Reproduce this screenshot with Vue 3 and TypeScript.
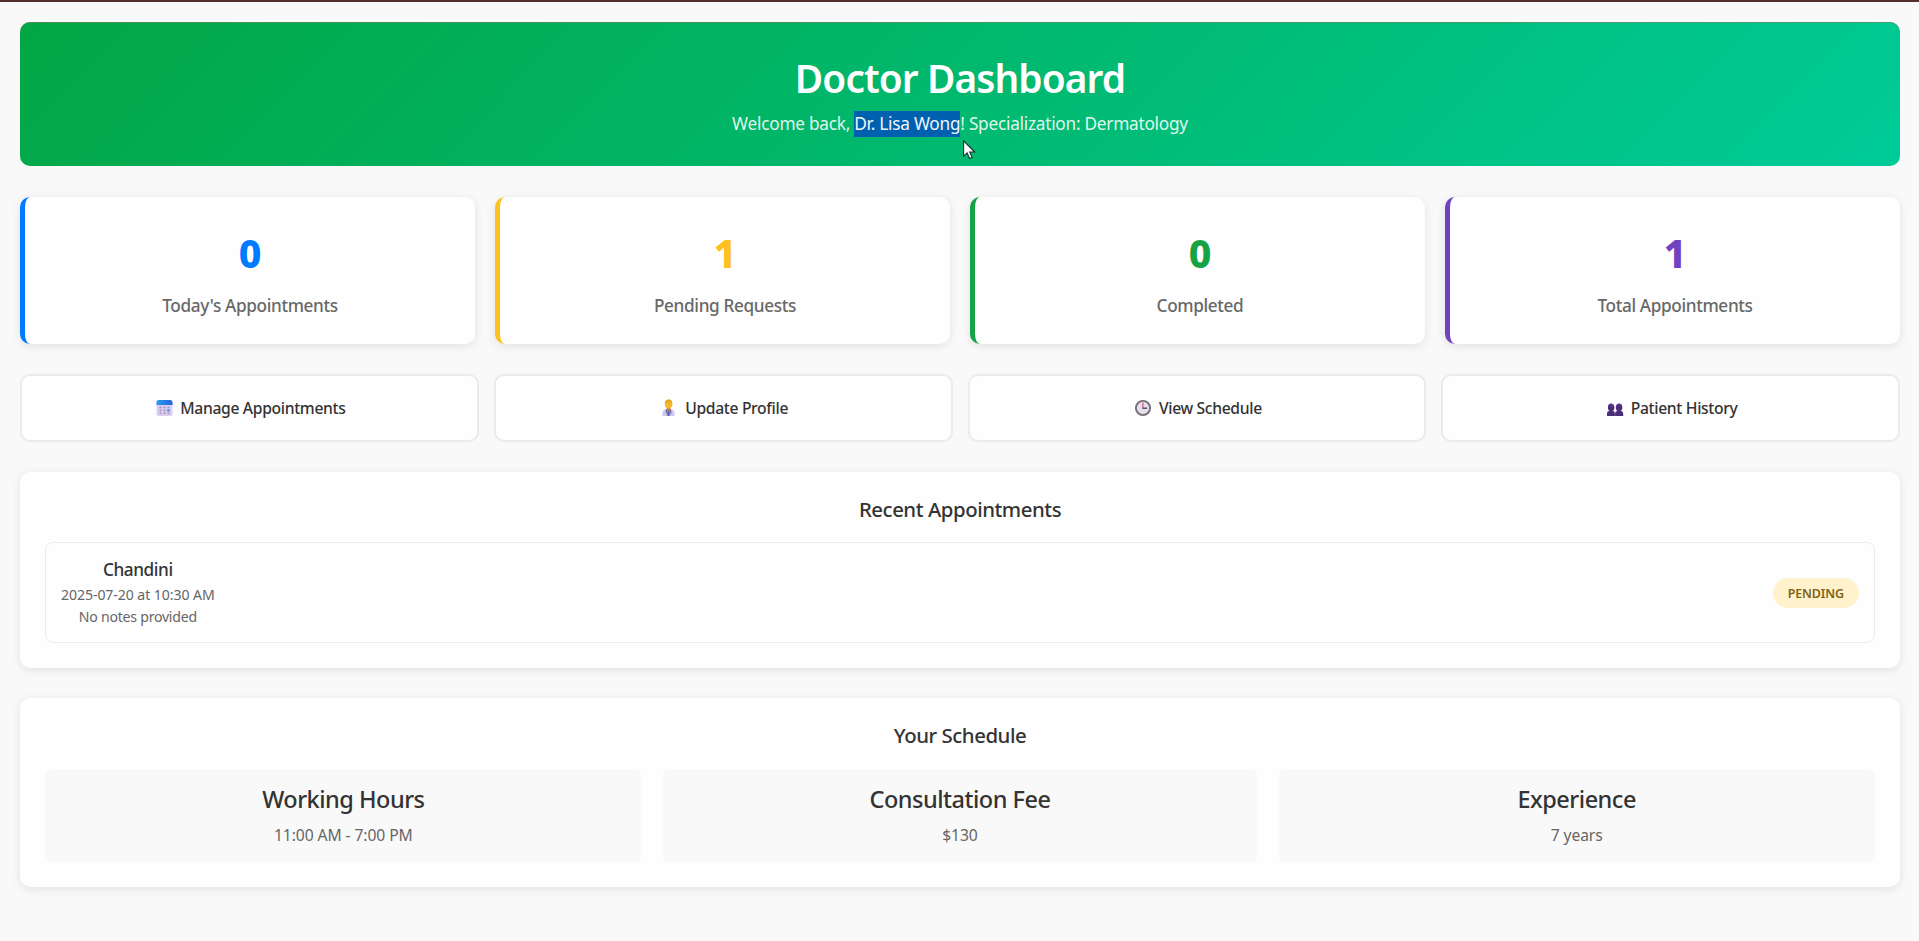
<script setup lang="ts">
interface Stat {
  value: number
  label: string
  tone: 'blue' | 'yellow' | 'green' | 'purple'
}

interface Action {
  icon: 'calendar' | 'doctor' | 'clock' | 'people'
  label: string
}

interface Appointment {
  patient: string
  when: string
  notes: string
  status: string
}

const doctor = { name: 'Dr. Lisa Wong', specialization: 'Dermatology' }

const stats: Stat[] = [
  { value: 0, label: "Today's Appointments", tone: 'blue' },
  { value: 1, label: 'Pending Requests', tone: 'yellow' },
  { value: 0, label: 'Completed', tone: 'green' },
  { value: 1, label: 'Total Appointments', tone: 'purple' },
]

const actions: Action[] = [
  { icon: 'calendar', label: 'Manage Appointments' },
  { icon: 'doctor', label: 'Update Profile' },
  { icon: 'clock', label: 'View Schedule' },
  { icon: 'people', label: 'Patient History' },
]

const appointments: Appointment[] = [
  {
    patient: 'Chandini',
    when: '2025-07-20 at 10:30 AM',
    notes: 'No notes provided',
    status: 'PENDING',
  },
]

const schedule = [
  { title: 'Working Hours', value: '11:00 AM - 7:00 PM' },
  { title: 'Consultation Fee', value: '$130' },
  { title: 'Experience', value: '7 years' },
]
</script>

<template>
  <div class="page">
    <main class="dashboard">
      <header class="hero">
        <h1>Doctor Dashboard</h1>
        <p>
          Welcome back,
          <span class="selected">{{ doctor.name }}<svg class="pointer" viewBox="0 0 13 20" aria-hidden="true">
            <path d="M.6.8v15.4l3.5-3.3 2.4 5.6 2.6-1.1-2.4-5.4h5z" fill="#fff" stroke="#16302a" stroke-width="1.1" />
          </svg></span>! Specialization: {{ doctor.specialization }}
        </p>
      </header>

      <section class="stats">
        <div v-for="stat in stats" :key="stat.label" class="stat" :class="stat.tone">
          <div class="stat-value">{{ stat.value }}</div>
          <div class="stat-label">{{ stat.label }}</div>
        </div>
      </section>

      <nav class="actions">
        <button v-for="action in actions" :key="action.label" type="button" class="action">
          <svg v-if="action.icon === 'calendar'" class="icon" viewBox="0 0 22 18" aria-hidden="true">
            <defs>
              <linearGradient id="cal-top" x1="0" x2="1">
                <stop offset="0" stop-color="#2a9bf2" />
                <stop offset="1" stop-color="#2367d8" />
              </linearGradient>
            </defs>
            <rect x="3.500" y="1" width="16" height="16" rx="2.600" fill="#d9cdf1" />
            <path d="M3.500 6V3.600A2.600 2.600 0 0 1 6.100 1h10.800A2.600 2.600 0 0 1 19.500 3.600V6z" fill="url(#cal-top)" />
            <g fill="#a497c1">
              <rect x="6.500" y="7.600" width="2" height="1.700" /><rect x="10.500" y="7.600" width="2" height="1.700" /><rect x="14.500" y="7.600" width="2" height="1.700" />
              <rect x="6.500" y="10.600" width="2" height="1.700" /><rect x="10.500" y="10.600" width="2" height="1.700" />
              <rect x="6.500" y="13.500" width="2" height="1.500" /><rect x="10.500" y="13.500" width="2" height="1.500" /><rect x="14.500" y="13.500" width="2" height="1.500" />
            </g>
            <rect x="14.200" y="10.400" width="2.500" height="2" fill="#3c83e6" />
          </svg>
          <svg v-else-if="action.icon === 'doctor'" class="icon" viewBox="0 0 22 18" aria-hidden="true">
            <path d="M4.500 17v-3.200c0-2.300 1.700-3.600 4-3.600h4c2.300 0 4 1.300 4 3.600V17z" fill="#cfc9ee" />
            <path d="M8 10h5l-.8 6.800H8.800z" fill="#817bc5" />
            <path d="M8.700 7.500h3.700v3.400l-1.900 1.600-1.800-1.600z" fill="#d98526" />
            <path d="M8.500 10.500l-.5 3.400M12.500 10.500l.5 4M10.500 12.500V17" fill="none" stroke="#50509e" stroke-width=".8" />
            <ellipse cx="10.600" cy="5.100" rx="3.700" ry="4.300" fill="#f5b72c" />
            <path d="M6.800 5.200C6.500 2.200 8.200.6 10.600.6c2.500 0 4.200 1.800 3.700 4.500-.7-1.600-2-1.900-3.600-1.700-1.300.2-2.400.2-3.900 1.800z" fill="#e6a524" />
          </svg>
          <svg v-else-if="action.icon === 'clock'" class="icon" viewBox="0 0 22 18" aria-hidden="true">
            <circle cx="11" cy="9" r="7.100" fill="#e5dfeb" stroke="#756f78" stroke-width="1.900" />
            <path d="M10.900 9.300V3.500" stroke="#d8477f" stroke-width="1.100" />
            <path d="M10.500 9.200h4.600" stroke="#403a4b" stroke-width="1.300" />
          </svg>
          <svg v-else class="icon" viewBox="0 0 22 18" aria-hidden="true">
            <g fill="#4b2d78">
              <path d="M3 17v-2.200c0-1.800 1-2.500 2.600-2.700-1.200-1-1.700-2-1.700-3.700 0-2.500 1.100-3.800 3.100-3.800s3.400 1.300 3.400 3.800c0 1.700-.5 2.700-1.700 3.700 1.600.2 2.200.9 2.200 2.700V17z" />
              <path d="M11.100 17v-2.200c0-1.800.8-2.500 2.400-2.700-1.200-1-1.700-2-1.700-3.700 0-2.500 1.400-3.800 3.400-3.800s3.100 1.300 3.100 3.800c0 1.700-.5 2.700-1.700 3.700 1.600.2 2.600.9 2.600 2.700V17z" />
            </g>
            <path d="M5 6.500q2-1.500 4 0M13.200 6.500q2-1.500 4 0" fill="none" stroke="#7045a2" stroke-width=".8" />
          </svg>
          <span>{{ action.label }}</span>
        </button>
      </nav>

      <section class="panel">
        <h2>Recent Appointments</h2>
        <article v-for="item in appointments" :key="item.when" class="appointment">
          <div class="details">
            <h3>{{ item.patient }}</h3>
            <p class="when">{{ item.when }}</p>
            <p class="notes">{{ item.notes }}</p>
          </div>
          <span class="badge">{{ item.status }}</span>
        </article>
      </section>

      <section class="panel schedule">
        <h2>Your Schedule</h2>
        <div class="tiles">
          <div v-for="tile in schedule" :key="tile.title" class="tile">
            <h3>{{ tile.title }}</h3>
            <p>{{ tile.value }}</p>
          </div>
        </div>
      </section>
    </main>
  </div>
</template>

<style>
body {
  margin: 0;
  background: #f9f9f9;
}
</style>

<style scoped>
.page {
  box-sizing: border-box;
  height: 941px;
  overflow: hidden;
  border-top: 2px solid #57302d;
  background: #f9f9f9;
  color: #333;
  font-family: "Segoe UI", "Noto Sans", "Open Sans", sans-serif;
  text-align: center;
}

h1, h2, h3, p {
  margin: 0;
  font-weight: 540;
}

p {
  font-weight: 400;
}

.dashboard {
  display: flex;
  flex-direction: column;
  gap: 30px;
  padding: 20px 19px 20px 20px;
}

.hero {
  box-sizing: border-box;
  height: 144px;
  padding-top: 32px;
  border-radius: 10px;
  background: linear-gradient(135deg, #02a644, #00cb98);
  box-shadow: inset 0 1px 0 rgba(110, 130, 100, 0.65);
  color: #fff;
}

.hero h1 {
  margin-bottom: 9px;
  font-size: 38.8px;
  font-weight: 600;
  line-height: 48px;
  letter-spacing: -0.9px;
}

.hero p {
  font-size: 17.25px;
  line-height: 26px;
  letter-spacing: -0.26px;
  color: rgba(255, 255, 255, 0.9);
}

.selected {
  position: relative;
  padding: 1px 0 2px;
  background: #0060b0;
  color: #f0f6fb;
}

.pointer {
  position: absolute;
  top: 29px;
  left: 109px;
  width: 13px;
  height: 20px;
}

.stats {
  display: grid;
  grid-template-columns: repeat(4, 1fr);
  gap: 20px;
  margin-top: 1px;
}

.stat {
  box-sizing: border-box;
  height: 147px;
  padding-top: 32px;
  border-left: 5px solid;
  border-radius: 10px;
  background: #fefefe;
  box-shadow: 0 2px 10px rgba(0, 0, 0, 0.1);
}

.blue { border-color: #007bff; }
.yellow { border-color: #ffc120; }
.green { border-color: #16a345; }
.purple { border-color: #6f42c1; }

.blue .stat-value { color: #007bff; }
.yellow .stat-value { color: #ffc120; }
.green .stat-value { color: #16a345; }
.purple .stat-value { color: #6f42c1; }

.stat-value {
  margin-bottom: 16px;
  font-size: 39.2px;
  font-weight: 780;
  line-height: 48px;
}

.stat-label {
  font-size: 17.2px;
  font-weight: 540;
  line-height: 26px;
  letter-spacing: -0.35px;
  color: #686868;
}

.actions {
  display: grid;
  grid-template-columns: repeat(4, 1fr);
  gap: 15px;
}

.action {
  display: flex;
  align-items: center;
  justify-content: center;
  gap: 5px;
  box-sizing: border-box;
  height: 68px;
  padding: 0;
  border: 2px solid #e9ebee;
  border-radius: 10px;
  background: #fefefe;
  color: #333;
  font: inherit;
  font-size: 15.7px;
  font-weight: 540;
  letter-spacing: -0.34px;
}

.icon {
  width: 22px;
  height: 18px;
}

.panel {
  padding: 25px;
  border-radius: 10px;
  background: #fefefe;
  box-shadow: 0 2px 10px rgba(0, 0, 0, 0.1);
}

.panel h2 {
  margin-bottom: 20px;
  font-size: 20.4px;
  line-height: 25px;
  letter-spacing: -0.46px;
}

.appointment {
  display: flex;
  align-items: center;
  justify-content: space-between;
  box-sizing: border-box;
  height: 101px;
  padding: 0 15px;
  border: 1px solid #ececee;
  border-radius: 8px;
}

.details h3 {
  margin-bottom: 3px;
  font-size: 17.2px;
  line-height: 23px;
  letter-spacing: -0.42px;
}

.details p {
  font-size: 14.1px;
  line-height: 21.5px;
  color: #666;
}

.details .when {
  letter-spacing: -0.08px;
}

.details .notes {
  letter-spacing: -0.24px;
}

.badge {
  box-sizing: border-box;
  height: 30px;
  padding: 1px 15px 0;
  border-radius: 15px;
  background: #fff2cc;
  color: #806414;
  font-size: 12.5px;
  font-weight: 560;
  line-height: 29px;
  letter-spacing: -0.15px;
}

.schedule h2 {
  margin-bottom: 21px;
}

.tiles {
  display: grid;
  grid-template-columns: repeat(3, 1fr);
  gap: 20px;
}

.tile {
  padding: 16px 15px 15px;
  border-radius: 8px;
  background: #f9f9f9;
}

.tile h3 {
  margin-bottom: 9px;
  font-size: 23.5px;
  line-height: 29px;
  letter-spacing: -0.5px;
}

.tile p {
  font-size: 15.7px;
  line-height: 24px;
  letter-spacing: -0.1px;
  color: #666;
}
</style>
